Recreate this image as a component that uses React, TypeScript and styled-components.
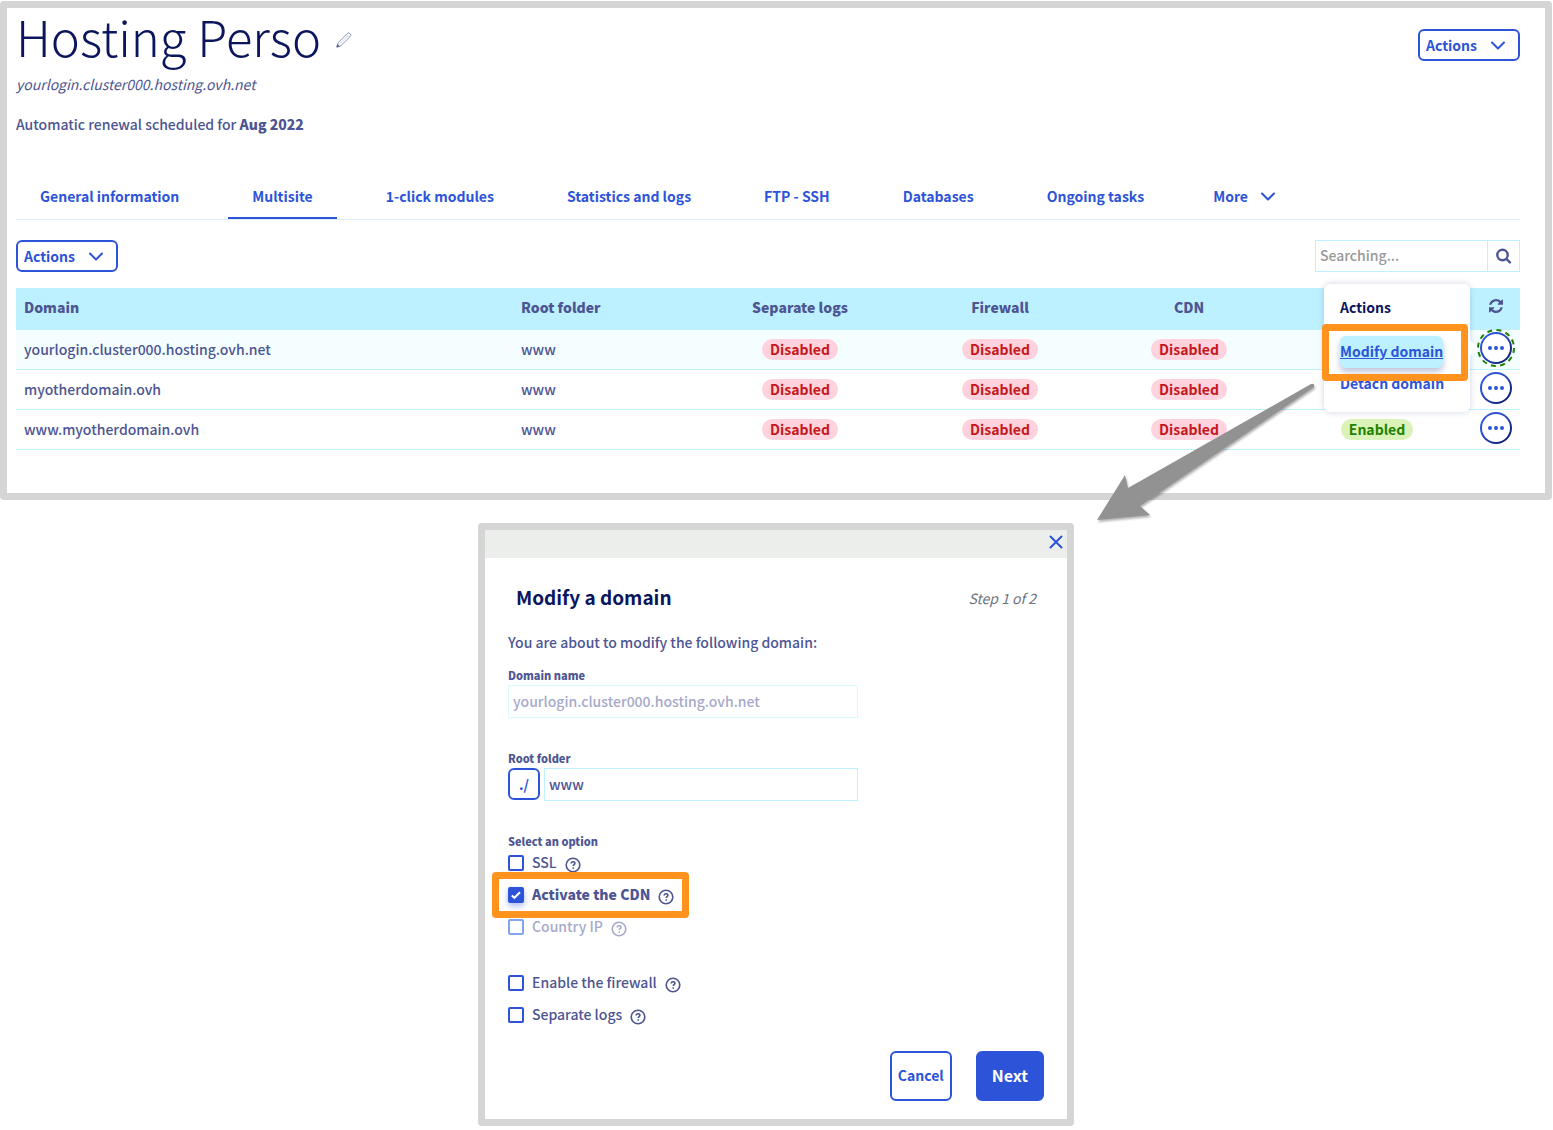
import React, { useState } from "react";
import styled, { createGlobalStyle, css } from "styled-components";

const color = {
  text: "#4d5592",
  heading: "#0a155e",
  blue: "#2d53d8",
  frame: "#d5d5d5",
  cyan: "#bef1ff",
  orange: "#ff931e",
};

const GlobalStyle = createGlobalStyle`
  *, *::before, *::after { box-sizing: border-box; }
  body {
    margin: 0;
    background: #fff;
    color: ${color.text};
    font-family: "Noto Sans CJK JP", "Noto Sans", sans-serif;
    font-size: 14px;
    font-weight: 500;
    line-height: 24px;
  }
  button, input { font: inherit; color: inherit; }
  button { cursor: pointer; }
  h1, h2, p { margin: 0; }
`;

const Page = styled.main`
  display: flex;
  flex-direction: column;
  gap: 23px;
  padding: 1px 1px 4px 0;
`;

const Frame = styled.section`
  border: 7px solid ${color.frame};
  border-radius: 4px;
  background: #fff;
`;

const HostingPanel = styled(Frame)`
  padding: 0 25px 43px 9px;
`;

const Header = styled.header`
  display: flex;
  justify-content: space-between;
  align-items: flex-start;
`;

const TitleRow = styled.div`
  display: flex;
  align-items: center;
  gap: 15px;
  height: 64px;
`;

const Title = styled.h1`
  padding-bottom: 8px;
  color: ${color.heading};
  font-size: 49px;
  font-weight: 300;
  line-height: 56px;
`;

const IconButton = styled.button`
  display: inline-flex;
  align-items: center;
  justify-content: center;
  padding: 0;
  border: 0;
  background: none;
  color: ${color.text};
`;

const Hostname = styled.p`
  font-style: italic;
  font-weight: 400;
`;

const Renewal = styled.p`
  margin-top: 16px;
  strong { font-weight: 900; }
`;

const OutlineButton = styled.button`
  display: inline-flex;
  align-items: center;
  justify-content: center;
  border: 2px solid ${color.blue};
  border-radius: 6px;
  background: #fff;
  color: ${color.blue};
  font-weight: 700;
`;

const MenuButton = styled(OutlineButton)`
  gap: 13px;
  height: 32px;
  padding: 0 12px 0 6px;
`;

const HeaderActions = styled.div`
  display: flex;
  padding-top: 21px;
`;

const Tabs = styled.nav`
  display: flex;
  gap: 25px;
  margin-top: 37px;
  border-bottom: 1px solid #dfeef6;
`;

const Tab = styled.a<{ $active?: boolean }>`
  display: inline-flex;
  align-items: center;
  gap: 12px;
  height: 46px;
  padding: 2px 24px 0;
  border-bottom: 2px solid ${(p) => (p.$active ? color.blue : "transparent")};
  color: ${color.blue};
  font-weight: 700;
  text-decoration: none;
  white-space: nowrap;
  &:last-child { padding-left: 20px; }
`;

const Toolbar = styled.div`
  display: flex;
  justify-content: space-between;
  margin: 20px 0 16px;
`;

const Search = styled.form`
  display: flex;
  width: 205px;
  height: 32px;
  border: 1px solid ${color.cyan};
`;

const SearchInput = styled.input`
  flex: 1;
  min-width: 0;
  padding: 0 4px 2px;
  border: 0;
  &::placeholder { color: #999; opacity: 1; }
`;

const SearchButton = styled(IconButton)`
  width: 32px;
  border-left: 1px solid ${color.cyan};
`;

const Table = styled.table`
  width: 100%;
  table-layout: fixed;
  border-collapse: separate;
  border-spacing: 0;
`;

const Col = styled.col<{ $width?: number }>`
  width: ${(p) => (p.$width ? `${p.$width}px` : "auto")};
`;

const Th = styled.th<{ $center?: boolean }>`
  height: 42px;
  padding: 0 8px 4px;
  background: ${color.cyan};
  font-weight: 900;
  text-align: ${(p) => (p.$center ? "center" : "left")};
`;

const Tr = styled.tr<{ $active?: boolean }>`
  background: ${(p) => (p.$active ? "#f5feff" : "#fff")};
`;

const Td = styled.td<{ $center?: boolean }>`
  height: 40px;
  padding: 0 8px 2px;
  border-bottom: 1px solid ${color.cyan};
  text-align: ${(p) => (p.$center ? "center" : "left")};
`;

const ActionTd = styled(Td)`
  padding: 0 8px 3px;
  vertical-align: middle;
`;

const Badge = styled.span<{ $on?: boolean }>`
  display: inline-block;
  padding: 0 8px;
  border-radius: 11px;
  background: ${(p) => (p.$on ? "#dbf2b9" : "#ffd2dd")};
  color: ${(p) => (p.$on ? "#228200" : "#c4181c")};
  font-weight: 700;
  line-height: 21px;
`;

const MenuAnchor = styled.div`
  position: relative;
  display: flex;
  width: 32px;
  height: 32px;
`;

const RoundButton = styled.button`
  display: flex;
  align-items: center;
  justify-content: center;
  width: 32px;
  height: 32px;
  padding: 0;
  border: 2px solid transparent;
  border-radius: 50%;
  background: linear-gradient(#fff, #fff) padding-box,
    linear-gradient(135deg, ${color.blue} 30%, ${color.heading}) border-box;
  color: ${color.blue};
`;

const FocusRing = styled.svg`
  position: absolute;
  inset: -3px;
  width: 38px;
  height: 38px;
  pointer-events: none;
`;

const Popover = styled.div`
  position: absolute;
  z-index: 2;
  top: -48px;
  right: calc(100% + 10px);
  width: 146px;
  padding: 11px 16px 12px;
  border-radius: 6px;
  background: #fff;
  box-shadow: 0 0 6px rgba(77, 85, 146, 0.25);
  text-align: left;
  white-space: nowrap;
  &::after {
    content: "";
    position: absolute;
    top: 56px;
    left: 100%;
    border: solid transparent;
    border-width: 8px 0 8px 8px;
    border-left-color: #fff;
  }
`;

const PopoverTitle = styled.p`
  margin-bottom: 17px;
  color: ${color.heading};
  font-weight: 700;
`;

const PopoverItem = styled.div`
  position: relative;
  width: fit-content;
`;

const PopoverLink = styled.a<{ $hovered?: boolean }>`
  display: block;
  padding-bottom: 2px;
  border-radius: 6px;
  color: ${color.blue};
  font-weight: 700;
  line-height: 30px;
  text-decoration: none;
  ${(p) =>
    p.$hovered &&
    css`
      background: ${color.cyan};
      box-shadow: 0 4px 6px rgba(77, 85, 146, 0.35);
      text-decoration: underline;
    `}
`;

const Highlight = styled.span<{ $inset: string }>`
  position: absolute;
  z-index: 1;
  inset: ${(p) => p.$inset};
  border: 7px solid ${color.orange};
  border-radius: 4px;
  pointer-events: none;
`;

const Pointer = styled.svg`
  position: absolute;
  top: 91px;
  right: calc(100% + 4px);
  width: 230px;
  height: 155px;
  pointer-events: none;
  filter: drop-shadow(1px 2px 1px rgba(0, 0, 0, 0.3));
`;

const Dialog = styled(Frame)`
  align-self: center;
  width: 100%;
  max-width: 596px;
`;

const DialogBar = styled.div`
  display: flex;
  justify-content: flex-end;
  height: 28px;
  padding: 0 4px 4px;
  background: #eceeeb;
`;

const DialogBody = styled.form`
  display: flex;
  flex-direction: column;
  padding: 24px 23px 18px;
`;

const DialogHeader = styled.div`
  display: flex;
  align-items: center;
  justify-content: space-between;
  height: 32px;
  padding: 0 8px;
`;

const DialogTitle = styled.h2`
  padding-bottom: 2px;
  color: ${color.heading};
  font-size: 19px;
  font-weight: 700;
`;

const Step = styled.span`
  color: #6b7480;
  font-style: italic;
  font-weight: 400;
`;

const Intro = styled.p`
  margin: 16px 0 14px;
`;

const Field = styled.div`
  width: 350px;
  max-width: 100%;
  margin-bottom: 33px;
`;

const smallLabel = css`
  display: block;
  padding: 0 0 2px;
  font-size: 11px;
  font-weight: 900;
  line-height: 15px;
`;

const Label = styled.label`
  ${smallLabel}
`;

const Legend = styled.legend`
  ${smallLabel}
`;

const FieldRow = styled.div`
  display: flex;
  gap: 4px;
`;

const TextInput = styled.input`
  flex: 1;
  min-width: 0;
  height: 33px;
  padding: 0 4px 2px;
  border: 1px solid ${color.cyan};
  background: #fff;
  &:disabled { border-color: #def8ff; color: #a6aac9; }
`;

const PathButton = styled(OutlineButton)`
  width: 32px;
  height: 32px;
  padding: 0;
`;

const Options = styled.fieldset`
  min-width: 0;
  margin: 0 0 20px;
  padding: 0;
  border: 0;
`;

const OptionGroup = styled.div`
  display: flex;
  flex-direction: column;
  align-items: flex-start;
  & + & { margin-top: 24px; }
`;

const OptionRow = styled.div<{ $disabled?: boolean }>`
  position: relative;
  display: flex;
  align-items: center;
  gap: 8px;
  height: 32px;
  color: ${(p) => (p.$disabled ? "#a6aac9" : color.text)};
`;

const FirstGroup = styled(OptionGroup)`
  margin: -4px 0 0;
`;

const OptionLabel = styled.label<{ $bold?: boolean }>`
  display: flex;
  align-items: center;
  gap: 8px;
  font-weight: ${(p) => (p.$bold ? 900 : 500)};
`;

const OptionText = styled.span`
  padding-bottom: 2px;
`;

const Checkbox = styled.input`
  appearance: none;
  width: 16px;
  height: 16px;
  margin: 0;
  border: 2px solid ${color.blue};
  border-radius: 2px;
  background: #fff;
  &:disabled { border-color: #7fa6ee; }
  &:checked {
    background: ${color.blue}
      url("data:image/svg+xml,%3Csvg xmlns='http://www.w3.org/2000/svg' viewBox='0 0 12 12'%3E%3Cpath d='M1.8 6.4l2.6 2.4L10 3.2' fill='none' stroke='white' stroke-width='2'/%3E%3C/svg%3E")
      center / 12px no-repeat;
    box-shadow: 0 3px 6px rgba(45, 83, 216, 0.4);
  }
`;

const HelpButton = styled(IconButton)`
  padding-top: 3px;
  color: inherit;
`;

const Footer = styled.div`
  display: flex;
  justify-content: flex-end;
  gap: 24px;
`;

const CancelButton = styled(OutlineButton)`
  height: 50px;
  padding: 0 6px 2px;
`;

const NextButton = styled(OutlineButton)`
  height: 50px;
  padding: 0 14px 2px;
  background: ${color.blue};
  color: #fff;
  font-size: 16px;
`;

const Chevron = () => (
  <svg width="16" height="16" viewBox="0 0 16 16" fill="none" stroke="currentColor" strokeWidth="2" strokeLinecap="round" strokeLinejoin="round">
    <path d="M2 5.5l6 6 6-6" />
  </svg>
);

const PencilIcon = () => (
  <svg width="16" height="16" viewBox="0 0 18 18" fill="none" stroke="currentColor" strokeWidth="0.7" strokeLinejoin="round">
    <path d="M1 17l1.6-5.2L12.4 2l1.2-.9h1.2L16.6 3v1.2l-1 1.2-9.8 9.8L1 17z" />
    <path d="M11.4 3l3.3 3.3M13 4.6l-9 9" strokeWidth="0.3" />
    <path d="M1 17l.8-2.8 2 2z" fill="currentColor" />
  </svg>
);

const SearchIcon = () => (
  <svg width="16" height="16" viewBox="0 0 16 16" fill="none" stroke="currentColor" strokeWidth="2.4" strokeLinecap="round">
    <circle cx="6.5" cy="7" r="5.2" />
    <path d="M10.5 11l3.4 3.4" />
  </svg>
);

const RefreshIcon = () => (
  <svg width="14" height="14" viewBox="0 0 1536 1536" fill="currentColor">
    <path d="M1511 928q0 5-1 7-64 268-268 434.500T764 1536q-146 0-282.500-55T238 1324l-129 129q-19 19-45 19t-45-19-19-45V960q0-26 19-45t45-19h448q26 0 45 19t19 45-19 45l-137 137q71 66 161 102t187 36q134 0 250-65t186-179q11-17 53-117 8-23 30-23h192q13 0 22.500 9.500t9.500 22.500zm25-800v448q0 26-19 45t-45 19h-448q-26 0-45-19t-19-45 19-45l138-138Q969 256 768 256q-134 0-250 65T332 500q-11 17-53 117-8 23-30 23H50q-13 0-22.500-9.500T18 608v-7q65-268 270-434.500T768 0q146 0 284 55.500T1297 212l130-129q19-19 45-19t45 19 19 45z" />
  </svg>
);

const DotsIcon = () => (
  <svg width="16" height="4" viewBox="0 0 16 4" fill="currentColor">
    <circle cx="2" cy="2" r="2" />
    <circle cx="8" cy="2" r="2" />
    <circle cx="14" cy="2" r="2" />
  </svg>
);

const CloseIcon = () => (
  <svg width="14" height="14" viewBox="0 0 14 14" fill="none" stroke={color.blue} strokeWidth="2" strokeLinecap="round">
    <path d="M1.5 1.5l11 11M12.5 1.5l-11 11" />
  </svg>
);

const HelpIcon = () => (
  <svg width="16" height="16" viewBox="0 0 16 16" fill="none" stroke="currentColor" strokeWidth="1.6">
    <circle cx="8" cy="8" r="6.8" />
    <path d="M6.2 6.6c0-1.2.8-1.9 1.9-1.9s1.8.7 1.8 1.6c0 1.3-1.7 1.4-1.7 2.8" />
    <circle cx="8.2" cy="11" r=".5" strokeWidth="0.9" fill="currentColor" />
  </svg>
);

const tabs = ["General information", "Multisite", "1-click modules", "Statistics and logs", "FTP - SSH", "Databases", "Ongoing tasks", "More"];

const sites = [
  { domain: "yourlogin.cluster000.hosting.ovh.net", folder: "www", menuOpen: true },
  { domain: "myotherdomain.ovh", folder: "www" },
  { domain: "www.myotherdomain.ovh", folder: "www", ssl: true },
];

type OptionProps = { id: string; label: string; defaultChecked?: boolean; disabled?: boolean; highlighted?: boolean };

const Option = ({ id, label, defaultChecked = false, disabled, highlighted }: OptionProps) => {
  const [checked, setChecked] = useState(defaultChecked);
  return (
    <OptionRow $disabled={disabled}>
      <OptionLabel htmlFor={id} $bold={checked}>
        <Checkbox id={id} type="checkbox" checked={checked} disabled={disabled} onChange={(e) => setChecked(e.target.checked)} />
        <OptionText>{label}</OptionText>
      </OptionLabel>
      <HelpButton type="button" aria-label={`Help: ${label}`}>
        <HelpIcon />
      </HelpButton>
      {highlighted && <Highlight $inset="-7px -15px -7px -16px" />}
    </OptionRow>
  );
};

const RowMenu = () => (
  <Popover>
    <PopoverTitle>Actions</PopoverTitle>
    <PopoverItem>
      <PopoverLink href="#modify" $hovered>Modify domain</PopoverLink>
      <Highlight $inset="-12px -25px -13px -18px" />
    </PopoverItem>
    <PopoverItem>
      <PopoverLink href="#detach">Detach domain</PopoverLink>
    </PopoverItem>
    <Pointer viewBox="0 0 230 155" aria-hidden="true">
      <path d="M7 145L35 100L38 113L221 9Q225 8 224 12L50 131L60 140Z" fill="#929292" />
    </Pointer>
  </Popover>
);

export default function App() {
  const [folder, setFolder] = useState("www");
  return (
    <>
      <GlobalStyle />
      <Page>
        <HostingPanel>
          <Header>
            <div>
              <TitleRow>
                <Title>Hosting Perso</Title>
                <IconButton type="button" aria-label="Edit name"><PencilIcon /></IconButton>
              </TitleRow>
              <Hostname>yourlogin.cluster000.hosting.ovh.net</Hostname>
              <Renewal>Automatic renewal scheduled for <strong>Aug 2022</strong></Renewal>
            </div>
            <HeaderActions>
              <MenuButton type="button">Actions <Chevron /></MenuButton>
            </HeaderActions>
          </Header>

          <Tabs>
            {tabs.map((tab) => (
              <Tab key={tab} href="#tab" $active={tab === "Multisite"}>
                {tab}
                {tab === "More" && <Chevron />}
              </Tab>
            ))}
          </Tabs>

          <Toolbar>
            <MenuButton type="button">Actions <Chevron /></MenuButton>
            <Search onSubmit={(e) => e.preventDefault()}>
              <SearchInput type="text" aria-label="Search" placeholder="Searching..." />
              <SearchButton type="submit" aria-label="Search"><SearchIcon /></SearchButton>
            </Search>
          </Toolbar>

          <Table>
            <colgroup>
              <Col />
              <Col $width={183} />
              <Col $width={208} />
              <Col $width={192} />
              <Col $width={186} />
              <Col $width={190} />
              <Col $width={48} />
            </colgroup>
            <thead>
              <tr>
                <Th>Domain</Th>
                <Th>Root folder</Th>
                <Th $center>Separate logs</Th>
                <Th $center>Firewall</Th>
                <Th $center>CDN</Th>
                <Th />
                <Th $center>
                  <IconButton type="button" aria-label="Refresh"><RefreshIcon /></IconButton>
                </Th>
              </tr>
            </thead>
            <tbody>
              {sites.map((site) => (
                <Tr key={site.domain} $active={site.menuOpen}>
                  <Td>{site.domain}</Td>
                  <Td>{site.folder}</Td>
                  <Td $center><Badge>Disabled</Badge></Td>
                  <Td $center><Badge>Disabled</Badge></Td>
                  <Td $center><Badge>Disabled</Badge></Td>
                  <Td $center>{site.ssl && <Badge $on>Enabled</Badge>}</Td>
                  <ActionTd>
                    <MenuAnchor>
                      <RoundButton type="button" aria-label={`Actions for ${site.domain}`}><DotsIcon /></RoundButton>
                      {site.menuOpen && (
                        <>
                          <FocusRing viewBox="0 0 38 38" fill="none" stroke="#1e8200" strokeWidth="2" strokeDasharray="5 4.42">
                            <circle cx="19" cy="19" r="18" />
                          </FocusRing>
                          <RowMenu />
                        </>
                      )}
                    </MenuAnchor>
                  </ActionTd>
                </Tr>
              ))}
            </tbody>
          </Table>
        </HostingPanel>

        <Dialog role="dialog" aria-labelledby="dialog-title">
          <DialogBar>
            <IconButton type="button" aria-label="Close"><CloseIcon /></IconButton>
          </DialogBar>
          <DialogBody onSubmit={(e) => e.preventDefault()}>
            <DialogHeader>
              <DialogTitle id="dialog-title">Modify a domain</DialogTitle>
              <Step>Step 1 of 2</Step>
            </DialogHeader>
            <Intro>You are about to modify the following domain:</Intro>
            <Field>
              <Label htmlFor="domain-name">Domain name</Label>
              <FieldRow>
                <TextInput id="domain-name" type="text" value="yourlogin.cluster000.hosting.ovh.net" disabled readOnly />
              </FieldRow>
            </Field>
            <Field>
              <Label htmlFor="root-folder">Root folder</Label>
              <FieldRow>
                <PathButton type="button">./</PathButton>
                <TextInput id="root-folder" type="text" value={folder} onChange={(e) => setFolder(e.target.value)} />
              </FieldRow>
            </Field>
            <Options>
              <Legend>Select an option</Legend>
              <FirstGroup>
                <Option id="ssl" label="SSL" />
                <Option id="cdn" label="Activate the CDN" defaultChecked highlighted />
                <Option id="country-ip" label="Country IP" disabled />
              </FirstGroup>
              <OptionGroup>
                <Option id="firewall" label="Enable the firewall" />
                <Option id="separate-logs" label="Separate logs" />
              </OptionGroup>
            </Options>
            <Footer>
              <CancelButton type="button">Cancel</CancelButton>
              <NextButton type="submit">Next</NextButton>
            </Footer>
          </DialogBody>
        </Dialog>
      </Page>
    </>
  );
}
